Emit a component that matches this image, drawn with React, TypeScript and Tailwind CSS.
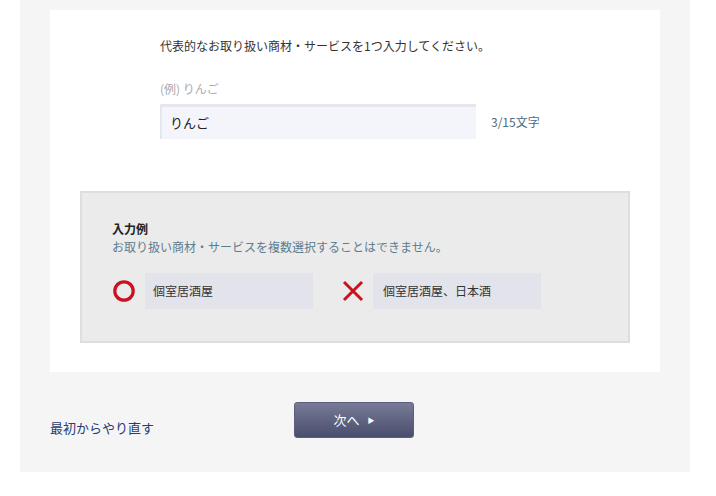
import React from 'react'

const FONT = '"Noto Sans CJK JP", "Noto Sans", sans-serif'

function CircleMark() {
  return (
    <svg width="24" height="24" viewBox="0 0 24 24" className="shrink-0">
      <circle cx="12" cy="12" r="9.2" fill="none" stroke="#c8121f" strokeWidth="3.2" />
    </svg>
  )
}

function CrossMark() {
  return (
    <svg width="24" height="24" viewBox="0 0 24 24" className="shrink-0">
      <path d="M3 3 L21 21 M21 3 L3 21" stroke="#c8121f" strokeWidth="3" strokeLinecap="butt" />
    </svg>
  )
}

export default function App() {
  return (
    <div className="w-full h-[496px] bg-white" style={{ fontFamily: FONT }}>
      <div className="ml-[20px] w-[670px] h-[472px] bg-[#f5f5f5] pt-[10px] px-[30px]">
        {/* Card */}
        <div className="w-[610px] h-[362px] bg-white pt-[27px]">
          <div className="pl-[110px]">
            <p className="text-[12px] leading-[18px] text-[#333]">
              代表的なお取り扱い商材・サービスを1つ入力してください。
            </p>
            <p className="mt-[25px] text-[12px] leading-[18px] text-[#aaa]">(例) りんご</p>
            <div className="mt-[6px] flex items-center">
              <div className="w-[316px] h-[35px] bg-[#f4f5fb] border-t-[3px] border-l-[2px] border-[#e6e7ee] flex items-center pl-[8px] text-[13px] text-[#222]">
                りんご
              </div>
              <span className="ml-[15px] text-[12px] text-[#4d6b80]">3/15文字</span>
            </div>
          </div>

          {/* Example box */}
          <div className="mt-[52px] ml-[30px] w-[550px] h-[152px] bg-[#ebebeb] border-2 border-[#dedede] pt-[27px] pl-[30px]">
            <p className="text-[12px] leading-[18px] font-bold text-[#222]">入力例</p>
            <p className="text-[12px] leading-[18px] text-[#5c7d8f]">
              お取り扱い商材・サービスを複数選択することはできません。
            </p>
            <div className="mt-[17px] flex items-center">
              <CircleMark />
              <div className="ml-[9px] w-[168px] h-[36px] bg-[#e3e4eb] flex items-center pl-[8px] text-[12px] text-[#333]">
                個室居酒屋
              </div>
              <div className="ml-[28px]">
                <CrossMark />
              </div>
              <div className="ml-[8px] w-[168px] h-[36px] bg-[#e3e4eb] flex items-center pl-[10px] text-[12px] text-[#333]">
                個室居酒屋、日本酒
              </div>
            </div>
          </div>
        </div>

        {/* Footer actions */}
        <div className="mt-[30px] flex items-end">
          <a href="#" className="w-[244px] text-[13px] leading-[18px] text-[#2b3a73] pb-[1px]">
            最初からやり直す
          </a>
          <button className="w-[120px] h-[36px] rounded-[3px] border border-[#5b5f7c] bg-gradient-to-b from-[#777b96] to-[#4a4e6e] text-white text-[13px] flex items-center justify-center gap-[8px]">
            <span>次へ</span>
            <span className="text-[7px]">▶</span>
          </button>
        </div>
      </div>
    </div>
  )
}
